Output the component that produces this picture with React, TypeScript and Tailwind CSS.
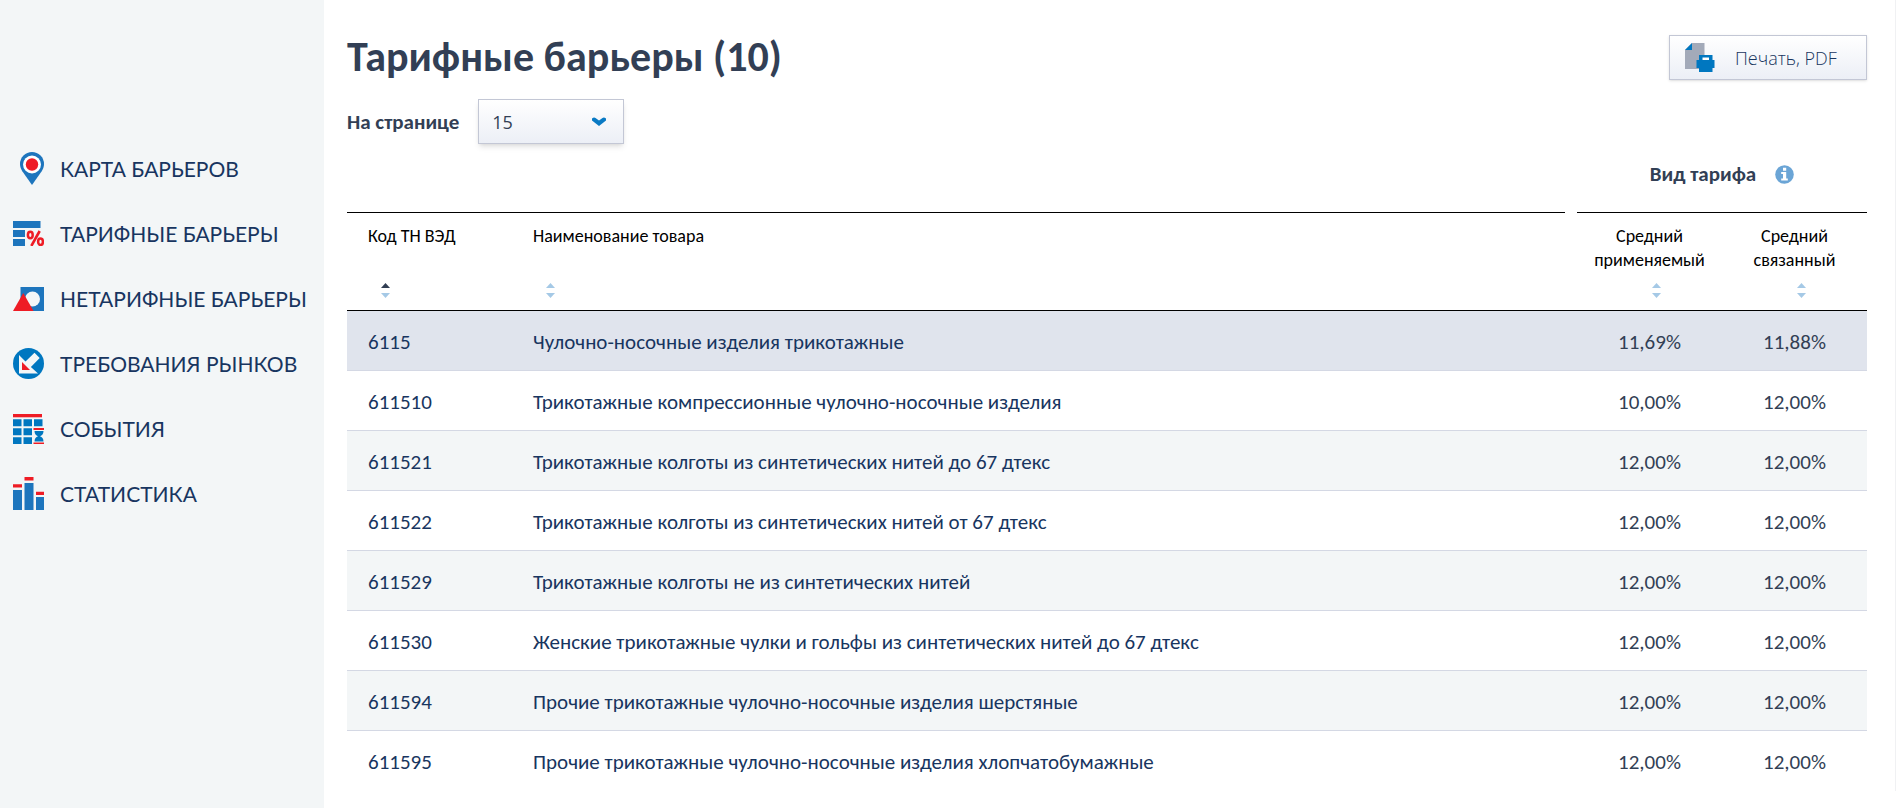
import type { ReactNode } from 'react';
import { clsx } from 'clsx';

interface MenuItem {
  label: string;
  icon: ReactNode;
}

interface TariffRow {
  code: string;
  name: string;
  applied: string;
  bound: string;
}

const menu: MenuItem[] = [
  {
    label: 'КАРТА БАРЬЕРОВ',
    icon: (
      <svg width="31" height="33" viewBox="0 0 31 33" aria-hidden="true">
        <path d="M19 0a12 12 0 0 0-12 12c0 3 1 5 2.300 7.200L19 33l9.700-13.800C30 17 31 15 31 12A12 12 0 0 0 19 0z" fill="#1d75bd" />
        <circle cx="19" cy="12.500" r="9" fill="#fff" />
        <circle cx="19" cy="12.500" r="6.200" fill="#ee1c25" />
      </svg>
    ),
  },
  {
    label: 'ТАРИФНЫЕ БАРЬЕРЫ',
    icon: (
      <svg width="31" height="25" viewBox="0 0 31 25" aria-hidden="true">
        <path d="M0 0h27.500v7H0zM0 9h12v7H0zM0 18h12v7H0z" fill="#1d75bd" />
        <g fill="none" stroke="#ee1c25">
          <ellipse cx="17.300" cy="14" rx="2.400" ry="3.200" strokeWidth="2.500" />
          <ellipse cx="27.500" cy="20.800" rx="2.400" ry="3.200" strokeWidth="2.500" />
          <path d="M26.700 10L18.300 25" strokeWidth="2.600" />
        </g>
      </svg>
    ),
  },
  {
    label: 'НЕТАРИФНЫЕ БАРЬЕРЫ',
    icon: (
      <svg width="31" height="24" viewBox="0 0 31 24" aria-hidden="true">
        <path d="M7.500 0H31v24H7.500z" fill="#1d75bd" />
        <circle cx="19.500" cy="12" r="7.500" fill="#f3f6f7" />
        <path d="M10.300 6L20.500 24H0z" fill="#ee1c25" />
      </svg>
    ),
  },
  {
    label: 'ТРЕБОВАНИЯ РЫНКОВ',
    icon: (
      <svg width="31" height="31" viewBox="0 0 31 31" aria-hidden="true">
        <circle cx="15.500" cy="15.500" r="15.500" fill="#0077c0" />
        <path d="M6 7l6.500 6.500L21.500 4.700l5.200 5.200-8.800 9L25 25.500H6z" fill="#f3f6f7" />
        <path d="M9 14l8 8H9z" fill="#ee1c25" />
      </svg>
    ),
  },
  {
    label: 'СОБЫТИЯ',
    icon: (
      <svg width="31" height="30" viewBox="0 0 31 30" aria-hidden="true">
        <path d="M0 0h29v3.300H0z" fill="#ee1c25" />
        <path
          d="M0 5.300h8.500v7H0zM10.500 5.300H19v7h-8.500zM21 5.300h8.500v7H21zM0 14.200h8.500v7H0zM10.500 14.200H19v7h-8.500zM0 23.200h8.500V30H0zM10.500 23.200H19V30h-8.500z"
          fill="#0077c0"
        />
        <path d="M20.500 14H31v2H20.500zM20.500 28.500H31V30H20.500z" fill="#ee1c25" />
        <path d="M21.500 17h9c0 3-1.500 4.500-3.500 5.300 2 .8 3.500 2.200 3.500 5.200h-9c0-3 1.500-4.400 3.500-5.200-2-.8-3.500-2.300-3.500-5.300z" fill="#0077c0" />
      </svg>
    ),
  },
  {
    label: 'СТАТИСТИКА',
    icon: (
      <svg width="31" height="33" viewBox="0 0 31 33" aria-hidden="true">
        <path d="M0 13h9v20H0zM11.500 6h9v27h-9zM23 20h8v13h-8z" fill="#1d75bd" />
        <path d="M0 7.300h9v3.200H0zM11.500 0h9v3.500h-9zM23 14.800h8V18h-8z" fill="#ee1c25" />
      </svg>
    ),
  },
];

const rows: TariffRow[] = [
  { code: '6115', name: 'Чулочно-носочные изделия трикотажные', applied: '11,69%', bound: '11,88%' },
  { code: '611510', name: 'Трикотажные компрессионные чулочно-носочные изделия', applied: '10,00%', bound: '12,00%' },
  { code: '611521', name: 'Трикотажные колготы из синтетических нитей до 67 дтекс', applied: '12,00%', bound: '12,00%' },
  { code: '611522', name: 'Трикотажные колготы из синтетических нитей от 67 дтекс', applied: '12,00%', bound: '12,00%' },
  { code: '611529', name: 'Трикотажные колготы не из синтетических нитей', applied: '12,00%', bound: '12,00%' },
  { code: '611530', name: 'Женские трикотажные чулки и гольфы из синтетических нитей до 67 дтекс', applied: '12,00%', bound: '12,00%' },
  { code: '611594', name: 'Прочие трикотажные чулочно-носочные изделия шерстяные', applied: '12,00%', bound: '12,00%' },
  { code: '611595', name: 'Прочие трикотажные чулочно-носочные изделия хлопчатобумажные', applied: '12,00%', bound: '12,00%' },
];

function Sidebar() {
  return (
    <aside className="w-[324px] shrink-0 bg-[#f3f6f7] pt-[136px]">
      <nav>
        <ul>
          {menu.map((item) => (
            <li key={item.label}>
              <a
                href="#"
                className="flex h-[65px] items-center gap-4 pl-[13px] font-['Lato',sans-serif] text-[21px] whitespace-nowrap text-[#183560]"
              >
                <span className="w-[31px] shrink-0">{item.icon}</span>
                {item.label}
              </a>
            </li>
          ))}
        </ul>
      </nav>
    </aside>
  );
}

function PrintIcon() {
  return (
    <svg width="30" height="30" viewBox="0 0 30 30" aria-hidden="true">
      <path d="M7 0h12.500v26H0V7z" fill="#a3aab9" />
      <path d="M7 0v7H0z" fill="#0077c0" />
      <path d="M14 12h13.500v5H29.500v8h-2v4H14v-4h-2.500v-8H14z" fill="#0077c0" />
      <path d="M17.500 14.500h6.500v2.500h-6.500z" fill="#fff" />
    </svg>
  );
}

function SortButton({ label, ascending = false }: { label: string; ascending?: boolean }) {
  return (
    <button type="button" aria-label={label} className="ml-[13px] block cursor-pointer">
      <svg width="9" height="15" viewBox="0 0 9 15">
        <path d="M0 5L4.500 0 9 5z" fill={ascending ? '#313e53' : '#a5c9e6'} />
        <path d="M0 10l4.500 5L9 10z" fill="#a5c9e6" />
      </svg>
    </button>
  );
}

function TariffTable() {
  return (
    <table className="w-full table-fixed border-separate border-spacing-0">
      <colgroup>
        <col className="w-[165px]" />
        <col />
        <col className="w-3" />
        <col className="w-[145px]" />
        <col className="w-[145px]" />
      </colgroup>
      <thead>
        <tr>
          <td colSpan={3} />
          <th colSpan={2} scope="colgroup" className="h-[68px] pb-2">
            <div className="flex items-center justify-center gap-[19px] text-[21px] leading-7 font-bold text-[#323f55]">
              Вид тарифа
              <button type="button" aria-label="О виде тарифа" className="cursor-pointer">
                <svg width="19" height="19" viewBox="0 0 19 19">
                  <circle cx="9.500" cy="9.500" r="9.300" fill="#6ba5d6" />
                  <path d="M8 2.800h3.200v3H8zM6.200 7h5v6.600h1.600v2H6.200v-2H8V9H6.200z" fill="#fff" />
                </svg>
              </button>
            </div>
          </th>
        </tr>
        <tr className="text-lg leading-6 text-black">
          <th scope="col" className="border-y border-black pt-[11px] pb-3 pl-[21px] text-left align-top font-normal">
            <div className="min-h-[59px]">Код ТН ВЭД</div>
            <SortButton label="Сортировать по коду" ascending />
          </th>
          <th scope="col" className="border-y border-black pt-[11px] pb-3 pl-[21px] text-left align-top font-normal">
            <div className="min-h-[59px]">Наименование товара</div>
            <SortButton label="Сортировать по наименованию" />
          </th>
          <td className="border-b border-black" />
          <th scope="col" className="border-y border-black pt-[11px] pb-3 align-top font-normal">
            <div className="min-h-[59px]">Средний применяемый</div>
            <div className="flex justify-center">
              <SortButton label="Сортировать по применяемому тарифу" />
            </div>
          </th>
          <th scope="col" className="border-y border-black pt-[11px] pb-3 align-top font-normal">
            <div className="min-h-[59px] px-6">Средний связанный</div>
            <div className="flex justify-center">
              <SortButton label="Сортировать по связанному тарифу" />
            </div>
          </th>
        </tr>
      </thead>
      <tbody>
        {rows.map((row, i) => (
          <tr
            key={row.code}
            className={clsx(
              'text-[21px] text-[#183560] [&>td]:h-[60px] [&>td]:border-b [&>td]:border-[#d4d8e4] [&>td]:pt-1 last:[&>td]:border-transparent',
              i === 0 && 'bg-[#e0e4ed]',
              i > 0 && i % 2 === 0 && 'bg-[#f3f6f7]',
            )}
          >
            <td className="pl-[21px]">{row.code}</td>
            <td colSpan={2} className="pl-[21px]">
              <a href="#">{row.name}</a>
            </td>
            <td className="text-center text-[#323f55]">{row.applied}</td>
            <td className="text-center text-[#323f55]">{row.bound}</td>
          </tr>
        ))}
      </tbody>
    </table>
  );
}

export default function App() {
  return (
    <div className="flex min-h-screen bg-white font-['Carlito',Calibri,'Lato',sans-serif]">
      <Sidebar />
      <main className="mb-[18px] min-w-0 flex-1 border-r border-[#f0f1f3] pt-[35px] pr-7 pl-[23px]">
        <header className="flex items-start justify-between">
          <h1 className="text-[42px] leading-[44px] font-bold text-[#323f55]">Тарифные барьеры (10)</h1>
          <button
            type="button"
            className="flex h-[45px] w-[198px] cursor-pointer items-center gap-5 border border-[#c3c7d5] bg-linear-to-b from-white to-[#eceff6] pl-[15px] font-['Open_Sans',sans-serif] text-lg font-light text-[#183560] shadow-sm"
          >
            <PrintIcon />
            Печать, PDF
          </button>
        </header>

        <div className="mt-[19px] flex items-center gap-[19px]">
          <label htmlFor="per-page" className="text-[21px] leading-7 font-bold text-[#323f55]">
            На странице
          </label>
          <div className="relative">
            <select
              id="per-page"
              defaultValue="15"
              className="block h-[45px] w-[146px] appearance-none border border-[#c3c7d5] bg-linear-to-b from-white to-[#eceff6] px-[13px] font-['Open_Sans',sans-serif] text-lg text-[#323f55] shadow-md"
            >
              <option>15</option>
              <option>30</option>
              <option>50</option>
            </select>
            <svg
              className="pointer-events-none absolute top-[18px] right-[18px]"
              width="14"
              height="9"
              viewBox="0 0 14 9"
              aria-hidden="true"
            >
              <path d="M0 1.500Q2 0 3.500 1L7 3.500 10.500 1Q12 0 14 1.500V3.500L7 9 0 3.500z" fill="#0a7ac4" />
            </svg>
          </div>
        </div>

        <TariffTable />
      </main>
    </div>
  );
}
